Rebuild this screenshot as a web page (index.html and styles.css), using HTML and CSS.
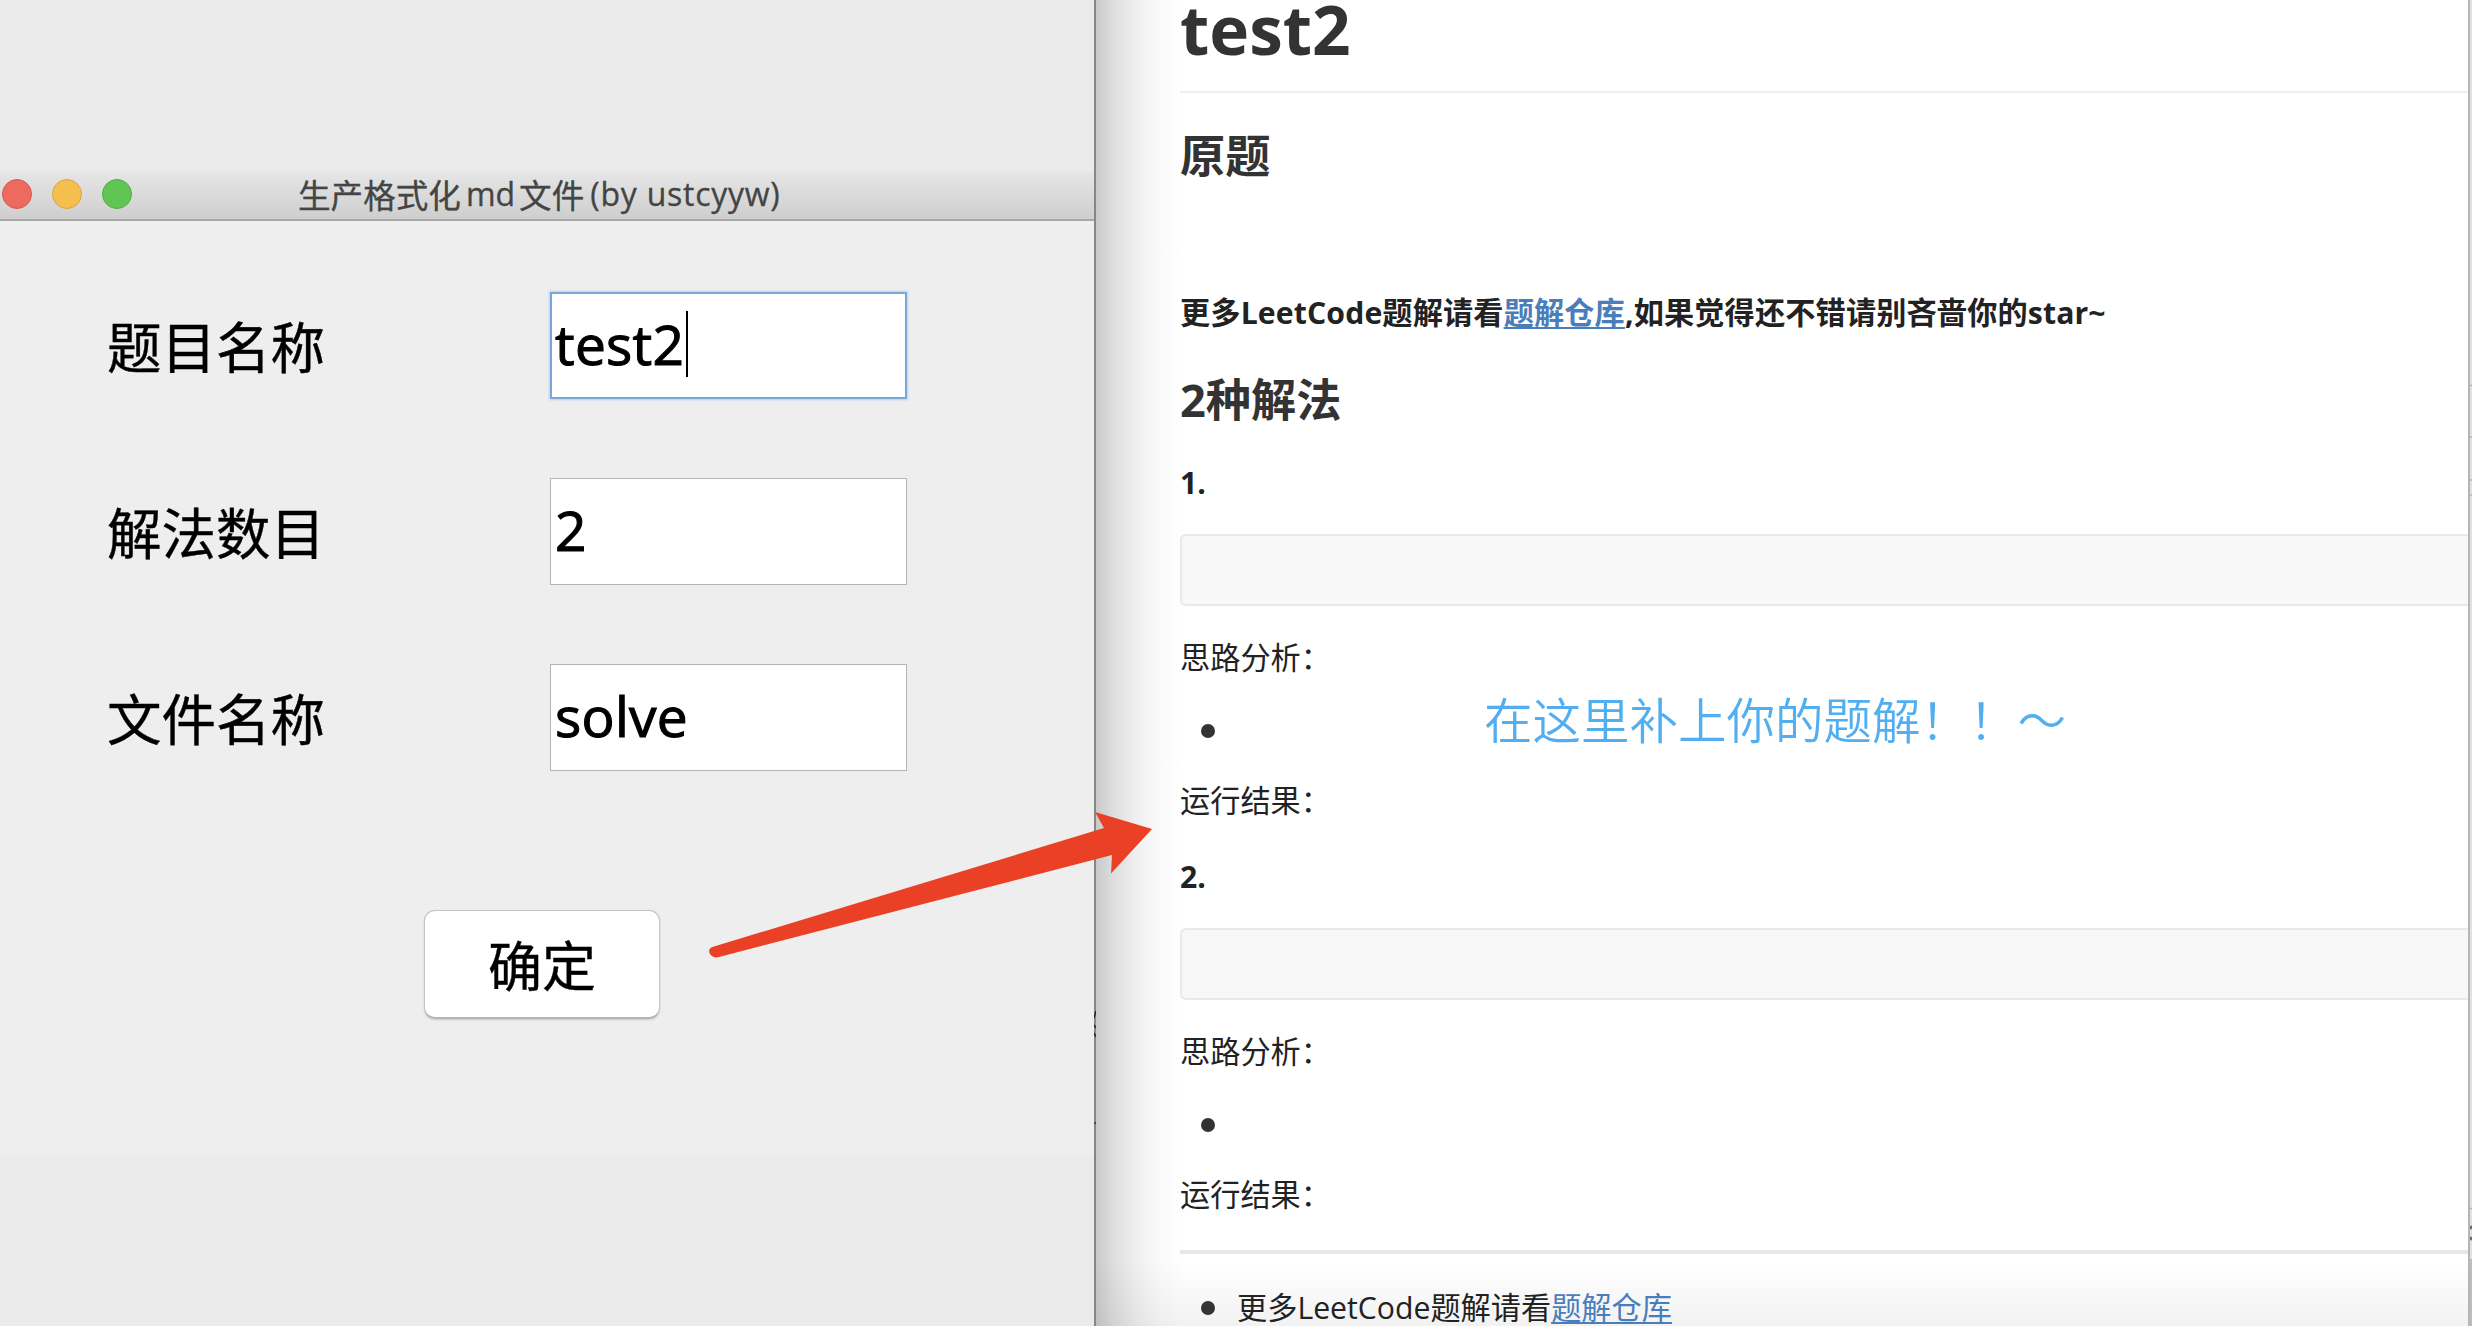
FILE: index.html
```html
<!DOCTYPE html>
<html lang="zh-CN">
<head>
<meta charset="utf-8">
<title>生产格式化md文件</title>
<link rel="stylesheet" href="styles.css">
</head>
<body>
<div class="screen">
  <section class="dialog">
    <header class="titlebar">
      <div class="lights"><i class="light close"></i><i class="light min"></i><i class="light max"></i></div>
      <h1 class="title"><span class="t1">生产格式化</span><span class="t2">md</span><span class="t3">文件</span><span class="t4">(by ustcyyw)</span></h1>
    </header>
    <form class="form">
      <div class="row"><label class="label">题目名称</label><div class="field focus"><span>test2</span><i class="caret"></i></div></div>
      <div class="row"><label class="label">解法数目</label><div class="field"><span>2</span></div></div>
      <div class="row"><label class="label">文件名称</label><div class="field"><span>solve</span></div></div>
      <button class="ok" type="button">确定</button>
    </form>
  </section>
  <article class="doc">
    <h1 class="doc-title">test2</h1>
    <h2 class="h2 origin">原题</h2>
    <p class="more">更多LeetCode题解请看<a class="link">题解仓库</a>,如果觉得还不错请别吝啬你的star~</p>
    <h2 class="h2 ways">2种解法</h2>
    <section class="solution">
      <p class="num">1.</p>
      <div class="code"></div>
      <p class="line">思路分析：</p>
      <div class="item"><i class="dot"></i></div>
      <p class="line">运行结果：</p>
    </section>
    <section class="solution">
      <p class="num">2.</p>
      <div class="code"></div>
      <p class="line">思路分析：</p>
      <div class="item"><i class="dot"></i></div>
      <p class="line">运行结果：</p>
    </section>
    <div class="rule"></div>
    <div class="item last"><i class="dot"></i><span>更多LeetCode题解请看<a class="link">题解仓库</a></span></div>
  </article>
  <aside class="behind"><svg width="4" height="1326" viewBox="0 0 4 1326">
    <path d="M0 385.500H4M0 437H4M0 480H4M0 495H4M0 1208.500H4" stroke="#b4b4b4" stroke-width="1.500"/>
    <rect y="1259" width="4" height="67" fill="#bdbdbd"/>
    <path d="M0 1229L2 1226M0 1237L2 1240" stroke="#666" stroke-width="2.500"/>
  </svg></aside>
  <svg class="arrow" width="450" height="160" viewBox="705 805 450 160">
    <path d="M714 946.500L1104 828L1095 812L1152 829L1111 873.500L1112 855L719 957Q713 958.500 710 954Q707 948.500 714 946.500Z" fill="#ea4025"/>
  </svg>
  <svg class="edge" width="2" height="180" viewBox="0 0 2 180">
    <path d="M2 0L0 7M0 14L2 17M0 22L2 26" stroke="#222" stroke-width="1.500"/>
    <path d="M0 112H2" stroke="#333" stroke-width="1.500"/>
  </svg>
  <div class="note">在这里补上你的题解！！～</div>
</div>
</body>
</html>
```
FILE: styles.css
```css
* { box-sizing: border-box; margin: 0; padding: 0; }
body { overflow: hidden; background: #fff; font-family: "Open Sans", "Noto Sans CJK SC", sans-serif; }
.screen { position: relative; display: flex; width: 2472px; height: 1326px; overflow: hidden; }

.dialog {
  width: 1096px; flex: none; padding-top: 171px;
  border-right: 2px solid #868686;
  background: linear-gradient(#ebebeb 0 171px, #eee 171px 1156px, #ebebeb 1156px);
}
.titlebar {
  display: flex; align-items: center; height: 50px; padding-left: 2px;
  background: linear-gradient(#e6e6e6, #cecece);
  border-bottom: 2px solid #a9a9a9;
}
.lights { display: flex; gap: 20px; width: 296px; margin-top: -3px; }
.light { width: 30px; height: 30px; border-radius: 50%; border: 1px solid; }
.close { background: #ed6a5e; border-color: #d9564b; }
.min { background: #f5bf4f; border-color: #dca43b; }
.max { background: #61c554; border-color: #4fad42; }
.title { display: flex; align-items: center; height: 48px; padding-bottom: 4px; font-size: 32px; font-weight: 400; color: #444; white-space: nowrap; -webkit-text-stroke: .3px #444; }
.t1, .t3 { font-family: "Noto Sans CJK SC", sans-serif; font-size: 32.600px; }
.t2 { margin: 0 4px 0 5px; }
.t4 { margin-left: 6px; letter-spacing: .750px; }

.form { padding: 71px 0 0 107px; }
.row { display: flex; align-items: center; height: 107px; margin-bottom: 79.200px; }
.label { width: 443px; padding-bottom: 1px; font: 400 54.500px/80px "Noto Sans CJK SC", sans-serif; color: #000; -webkit-text-stroke: .4px #000; }
.field {
  display: flex; align-items: center; width: 357px; height: 107px; padding: 0 0 3px 4px;
  border: 1px solid #b4b4b4; background: #fff;
  font: 400 55px/80px "Open Sans", sans-serif; color: #000; -webkit-text-stroke: 1.100px #000;
  letter-spacing: .300px;
}
.focus { border: 2px solid #7ba7d8; box-shadow: 0 0 2px 1px #b5d4f5; padding-left: 3px; }
.caret { width: 2px; height: 66px; margin-left: 2px; background: #000; }
.ok {
  display: block; width: 236px; height: 109px; margin: 139px 0 0 317px;
  border: 1px solid #c4c4c4; border-bottom: 2px solid #b4b4b4; border-radius: 11px; background: #fff;
  font: 400 54px/80px "Noto Sans CJK SC", sans-serif; color: #000; -webkit-text-stroke: .4px #000;
  box-shadow: 0 1px 2px rgba(0,0,0,.15);
}

.doc {
  width: 1372px; height: 1326px; flex: none; padding-left: 84px; overflow: hidden;
  font-size: 30.200px; line-height: 48px; color: #222;
  background:
    linear-gradient(transparent 1260px, rgba(0,0,0,.05)),
    linear-gradient(90deg, #c9c9c9, #dedede 18px, #efefef 40px, #fafafa 64px, #fff 88px);
}
.doc-title { height: 93px; border-bottom: 2px solid #eee; font-size: 67.500px; line-height: 59px; font-weight: 700; color: #333; }
.h2 { height: 60px; font-size: 45.200px; line-height: 60px; font-weight: 700; color: #333; }
.origin { margin-top: 33px; }
.more { margin-top: 103px; font-weight: 700; white-space: nowrap; letter-spacing: .130px; }
.ways { margin-top: 33px; }
.link { color: #4a7ebb; text-decoration: underline; text-underline-offset: 3px; text-decoration-thickness: 2px; }
.solution { height: 394px; }
.ways + .solution { margin-top: 29px; }
.num { font-weight: 700; }
.code { height: 72px; margin-top: 27px; border: 2px solid #e7e9eb; border-right: 0; border-radius: 6px 0 0 6px; background: #f8f8f8; }
.line { margin-top: 28px; }
.item { display: flex; align-items: center; height: 48px; padding-left: 21px; gap: 22px; }
.line + .item { margin-top: 25px; }
.item + .line { margin-top: 22px; }
.dot { width: 14px; height: 14px; border-radius: 50%; background: #333; }
.rule { height: 4px; margin-top: 3px; background: #e7e7e7; }
.last { margin-top: 30px; white-space: nowrap; }

.behind { width: 4px; height: 1326px; background: #e2e2e2; border-left: 2px solid #b5b5b5; overflow: hidden; }
.behind svg { display: block; }

.arrow { position: absolute; left: 705px; top: 805px; }
.edge { position: absolute; left: 1094px; top: 1011px; }
.note { position: absolute; left: 1484px; top: 682px; font: 350 48.500px/72px "Noto Sans CJK SC", sans-serif; color: #51aef0; white-space: nowrap; }
```
